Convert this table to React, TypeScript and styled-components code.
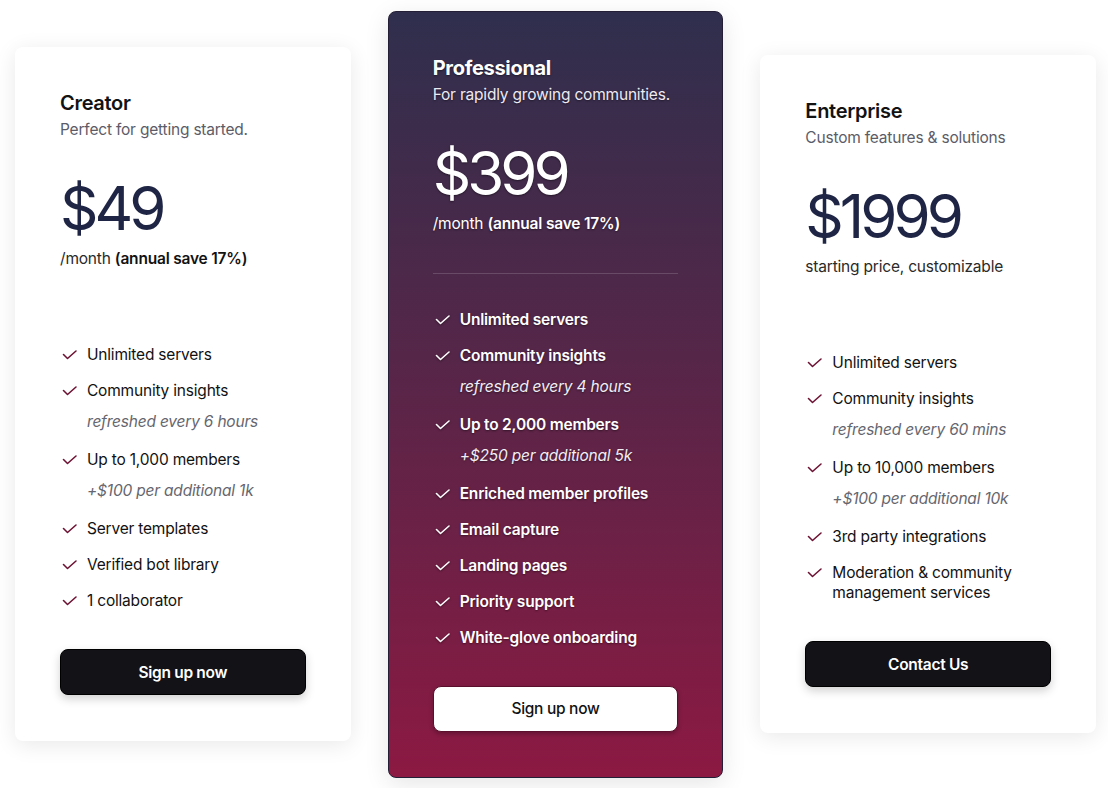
import React from 'react'
import styled, { createGlobalStyle, css } from 'styled-components'

const GlobalStyle = createGlobalStyle`
  html, body {
    margin: 0;
    padding: 0;
    background: #ffffff;
    font-family: Inter, 'Liberation Sans', sans-serif;
  }
`

type Variant = 'light' | 'featured'

interface Feature {
  label: string
  note?: string
}

interface Plan {
  name: string
  tagline: string
  price: string
  priceNote: React.ReactNode
  features: Feature[]
  cta: string
  variant: Variant
}

const Page = styled.div`
  height: 788px;
  box-sizing: border-box;
  padding: 0 12px 0 15px;
  display: flex;
  align-items: center;
  gap: 37px;
`

const Card = styled.div<{ $variant: Variant }>`
  width: 336px;
  box-sizing: border-box;
  padding: 42px 45px 46px;
  border-radius: 8px;
  display: flex;
  flex-direction: column;
  ${p =>
    p.$variant === 'featured'
      ? css`
          padding: 42px 44px 45px;
          background: linear-gradient(180deg, #2f2f4d 0%, #5a2548 50%, #8c1942 100%);
          border: 1px solid #241f36;
          box-shadow: 0 6px 24px rgba(0, 0, 0, 0.1);
          color: #ffffff;
          text-shadow: 0 1px 2px rgba(0, 0, 0, 0.45);
        `
      : css`
          background: #ffffff;
          box-shadow: 0 4px 22px rgba(0, 0, 0, 0.09);
          color: #121212;
        `}
`

const Name = styled.h2<{ $variant: Variant }>`
  margin: 0;
  font-size: 20px;
  line-height: 28px;
  letter-spacing: -0.3px;
  font-weight: ${p => (p.$variant === 'featured' ? 700 : 600)};
`

const Tagline = styled.p<{ $variant: Variant }>`
  margin: 0;
  font-size: 15.5px;
  line-height: 26px;
  letter-spacing: -0.2px;
  color: ${p => (p.$variant === 'featured' ? '#eeeaf2' : '#5c5c68')};
`

const Price = styled.div<{ $variant: Variant }>`
  margin-top: 27px;
  font-size: 60px;
  line-height: 76px;
  letter-spacing: -4px;
  font-weight: 400;
  color: ${p => (p.$variant === 'featured' ? '#ffffff' : '#1f2544')};
`

const PriceNote = styled.div<{ $variant: Variant }>`
  margin-top: 1px;
  font-size: 15.5px;
  line-height: 24px;
  letter-spacing: -0.2px;
  color: ${p => (p.$variant === 'featured' ? '#ffffff' : '#2a2a2a')};

  strong {
    font-weight: 600;
    color: ${p => (p.$variant === 'featured' ? '#ffffff' : '#121212')};
  }
`

const Divider = styled.hr<{ $variant: Variant }>`
  margin: 37px 0 36px;
  border: none;
  height: 1px;
  background: ${p =>
    p.$variant === 'featured' ? 'rgba(255, 255, 255, 0.16)' : 'transparent'};
`

const FeatureList = styled.ul`
  list-style: none;
  margin: 0;
  padding: 0;
  display: flex;
  flex-direction: column;
  gap: 16px;
`

const FeatureItem = styled.li`
  display: grid;
  grid-template-columns: 27px 1fr;
  align-items: start;
`

const CheckMark = styled.svg<{ $variant: Variant }>`
  margin-top: 3px;
  margin-left: 2px;
  color: ${p => (p.$variant === 'featured' ? '#ffffff' : '#6e1233')};
  filter: ${p =>
    p.$variant === 'featured' ? 'drop-shadow(0 1px 1px rgba(0,0,0,0.4))' : 'none'};
`

const FeatureText = styled.div<{ $variant: Variant }>`
  font-size: 15.5px;
  line-height: 20px;
  letter-spacing: -0.2px;
  font-weight: ${p => (p.$variant === 'featured' ? 600 : 400)};
`

const FeatureNote = styled.div<{ $variant: Variant }>`
  margin-top: 9px;
  font-size: 15.5px;
  line-height: 24px;
  letter-spacing: -0.2px;
  font-style: italic;
  font-weight: 400;
  color: ${p => (p.$variant === 'featured' ? '#f1eef4' : '#66666e')};
`

const Cta = styled.button<{ $variant: Variant }>`
  margin-top: 38px;
  height: 46px;
  width: 100%;
  border-radius: 8px;
  font-family: inherit;
  font-size: 15.5px;
  letter-spacing: -0.3px;
  cursor: pointer;
  ${p =>
    p.$variant === 'featured'
      ? css`
          background: #ffffff;
          color: #121212;
          font-weight: 500;
          border: 1px solid #5c0f2c;
          text-shadow: none;
          box-shadow: 0 2px 4px rgba(0, 0, 0, 0.25);
        `
      : css`
          background: #131217;
          color: #ffffff;
          font-weight: 600;
          border: 1px solid #000;
          box-shadow: 0 4px 10px rgba(0, 0, 0, 0.18);
        `}
`

const plans: Plan[] = [
  {
    name: 'Creator',
    tagline: 'Perfect for getting started.',
    price: '$49',
    priceNote: (
      <>
        /month <strong>(annual save 17%)</strong>
      </>
    ),
    features: [
      { label: 'Unlimited servers' },
      { label: 'Community insights', note: 'refreshed every 6 hours' },
      { label: 'Up to 1,000 members', note: '+$100 per additional 1k' },
      { label: 'Server templates' },
      { label: 'Verified bot library' },
      { label: '1 collaborator' },
    ],
    cta: 'Sign up now',
    variant: 'light',
  },
  {
    name: 'Professional',
    tagline: 'For rapidly growing communities.',
    price: '$399',
    priceNote: (
      <>
        /month <strong>(annual save 17%)</strong>
      </>
    ),
    features: [
      { label: 'Unlimited servers' },
      { label: 'Community insights', note: 'refreshed every 4 hours' },
      { label: 'Up to 2,000 members', note: '+$250 per additional 5k' },
      { label: 'Enriched member profiles' },
      { label: 'Email capture' },
      { label: 'Landing pages' },
      { label: 'Priority support' },
      { label: 'White-glove onboarding' },
    ],
    cta: 'Sign up now',
    variant: 'featured',
  },
  {
    name: 'Enterprise',
    tagline: 'Custom features & solutions',
    price: '$1999',
    priceNote: 'starting price, customizable',
    features: [
      { label: 'Unlimited servers' },
      { label: 'Community insights', note: 'refreshed every 60 mins' },
      { label: 'Up to 10,000 members', note: '+$100 per additional 10k' },
      { label: '3rd party integrations' },
      { label: 'Moderation & community management services' },
    ],
    cta: 'Contact Us',
    variant: 'light',
  },
]

const Check = ({ variant }: { variant: Variant }) => (
  <CheckMark
    $variant={variant}
    width="16"
    height="14"
    viewBox="0 0 16 14"
    fill="none"
    stroke="currentColor"
    strokeWidth="1.6"
    strokeLinecap="round"
    strokeLinejoin="round"
  >
    <polyline points="1.5,6.5 5.5,10.5 14,3" />
  </CheckMark>
)

const PlanCard = ({ plan }: { plan: Plan }) => {
  const v = plan.variant
  return (
    <Card $variant={v}>
      <Name $variant={v}>{plan.name}</Name>
      <Tagline $variant={v}>{plan.tagline}</Tagline>
      <Price $variant={v}>{plan.price}</Price>
      <PriceNote $variant={v}>{plan.priceNote}</PriceNote>
      <Divider $variant={v} />
      <FeatureList>
        {plan.features.map(f => (
          <FeatureItem key={f.label}>
            <Check variant={v} />
            <div>
              <FeatureText $variant={v}>{f.label}</FeatureText>
              {f.note && <FeatureNote $variant={v}>{f.note}</FeatureNote>}
            </div>
          </FeatureItem>
        ))}
      </FeatureList>
      <Cta $variant={v}>{plan.cta}</Cta>
    </Card>
  )
}

const App = () => (
  <>
    <GlobalStyle />
    <Page>
      {plans.map(plan => (
        <PlanCard key={plan.name} plan={plan} />
      ))}
    </Page>
  </>
)

export default App
